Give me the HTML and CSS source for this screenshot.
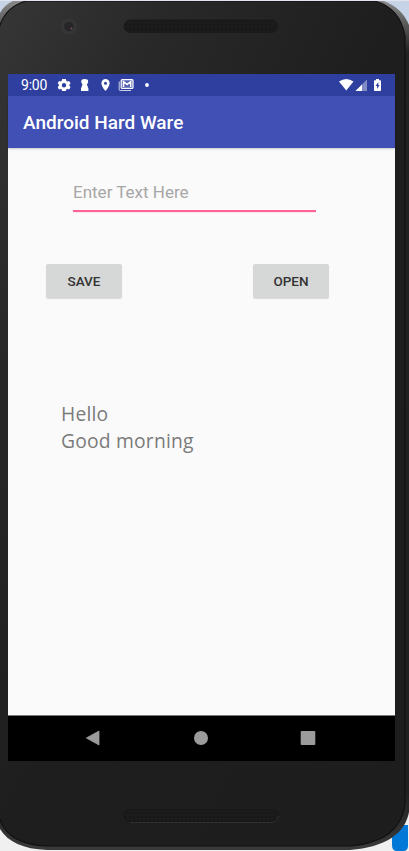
FILE: index.html
```
<!DOCTYPE html>
<html lang="en">
<head>
<meta charset="utf-8">
<title>Android Hard Ware</title>
<link rel="stylesheet" href="styles.css">
</head>
<body>
<div class="device">
  <svg class="shell" viewBox="0 0 409 851" aria-hidden="true">
    <defs>
      <linearGradient id="body" x1="0" y1="0" x2="1" y2="1">
        <stop offset="0" stop-color="#363636"/><stop offset=".2" stop-color="#292929"/><stop offset=".5" stop-color="#1e1e1e"/><stop offset="1" stop-color="#1d1d1d"/>
      </linearGradient>
      <linearGradient id="rim" x1="0" y1="0" x2="0" y2="1">
        <stop offset="0" stop-color="#888"/><stop offset=".03" stop-color="#555"/><stop offset=".06" stop-color="#222"/><stop offset=".93" stop-color="#202020"/><stop offset="1" stop-color="#3a3a3a"/>
      </linearGradient>
      <pattern id="mesh" width="4" height="4" patternUnits="userSpaceOnUse" x="1">
        <rect width="4" height="4" fill="#1c1c1c"/><circle cx="1" cy="1" r=".8" fill="#101010"/><circle cx="3" cy="3" r=".6" fill="#131313"/>
      </pattern>
    </defs>
    <rect width="409" height="426" fill="#c7d3e7"/>
    <rect y="425" width="409" height="426" fill="#f0f0f0"/>
    <path d="M392 825H408V846Q408 851 403 851H397Q392 851 392 845Z" fill="#0078d7"/>
    <path d="M13 1H384Q402 8 409 25V812C405 834 385 847 350 850H47C23 849 8 842 0 829V13Q4 5 13 1Z" fill="url(#rim)"/>
    <path d="M26 1H375Q400 8 405 36V805C401 829 386 842 351 846H47C20 845 4 835 -1 817V28Q5 7 26 1Z" fill="url(#body)" stroke="#111" stroke-width="1.200"/>
    <path d="M0 0H409V1H0Z" fill="#e1e6ee"/>
    <circle cx="69" cy="26.500" r="8" fill="#363636"/>
    <circle cx="69" cy="26.500" r="4.800" fill="#262529"/>
    <circle cx="71.500" cy="28.500" r="1" fill="#76535b"/>
    <rect x="124" y="20" width="154" height="12.500" rx="6.250" fill="url(#mesh)" stroke="#1b1b1b"/>
    <rect x="124" y="809.500" width="154" height="12" rx="6" fill="url(#mesh)" stroke="#171717"/>
    <path d="M130 822.500H272Q278 821 278.500 816" fill="none" stroke="#303030"/>
  </svg>

  <main class="screen">
    <div class="status">
      <span class="clock">9:00</span>
      <svg class="notices" viewBox="0 0 96 14" fill="#fff">
        <path fill-rule="evenodd" d="M5.200 1h3.600l.5 1.800 1 .6 1.800-.5 1.500 2.500-1.200 1.200v1.200l1.200 1.200-1.500 2.500-1.800-.5-1 .6-.5 1.400H5.200l-.5-1.400-1-.6-1.800.5L.7 9l1.200-1.200V6.600L.7 5.400l1.200-2.500 1.800.5 1-.6ZM7 5a2.200 2.200 0 1 0 0 4.400A2.200 2.200 0 0 0 7 5Z"/>
        <path d="M24.300 3Q24.300 1 27.700 1T31.100 3V4.500L29.900 6.500 31.400 10.500V13H24V10.500L25.500 6.500 24.300 4.500Z"/>
        <path fill-rule="evenodd" d="M48.500 1a4.100 4.100 0 0 0-4.100 4.200C44.400 8.500 48.500 13 48.500 13s4.100-4.500 4.100-7.800A4.100 4.100 0 0 0 48.500 1Zm0 2.700a1.500 1.500 0 1 1 0 3 1.500 1.500 0 0 1 0-3Z"/>
        <path fill="#ffffff30" stroke="#fff" stroke-width="1.200" d="M65.200 1.600h9.800q1 0 1 1v6.800q0 1-1 1h-9.800q-1 0-1-1V2.600q0-1 1-1Z"/>
        <path fill="none" stroke="#fff" stroke-opacity=".75" d="M62.200 3.500v8q0 1 1 1H74"/>
        <path fill="none" stroke="#fff" stroke-width="1.500" d="M66.500 9V3.500l3.600 3 3.600-3V9"/>
        <circle cx="90" cy="7" r="1.900"/>
      </svg>
      <svg class="signals" viewBox="0 0 43 14" fill="#fff">
        <path d="M0 3.500Q7.200-1.500 14.500 3.500L7.250 12.500Z"/>
        <path d="M16.500 13H28V1.500Z" opacity=".4"/><path d="M16.500 13H23V6.500Z"/>
        <path fill-rule="evenodd" d="M37 1h3v1.300h1.200q.8 0 .8.800v9q0 .9-.8.900h-5.400q-.8 0-.8-.9v-9q0-.8.8-.8H37Zm2.300 3-2.700 4h1.500v3l2.500-4h-1.300Z"/>
      </svg>
    </div>
    <header class="appbar">Android Hard Ware</header>
    <div class="content">
      <div class="field">Enter Text Here</div>
      <div class="actions">
        <button class="btn">SAVE</button>
        <button class="btn">OPEN</button>
      </div>
      <p class="output">Hello<br>Good morning</p>
    </div>
    <nav class="nav">
      <svg viewBox="0 0 16 16" fill="#9b9b9b"><path d="M1.300 8 14 1V15Z" stroke="#9b9b9b" stroke-width=".8" stroke-linejoin="round"/></svg>
      <svg viewBox="0 0 16 16" fill="#9b9b9b"><circle cx="8" cy="8" r="7"/></svg>
      <svg viewBox="0 0 16 16" fill="#9b9b9b"><rect x=".7" y="1" width="14.600" height="14" rx="1"/></svg>
    </nav>
  </main>
</div>
</body>
</html>
```
FILE: styles.css
```
* { box-sizing: border-box; }
body { margin: 0; font-family: Roboto, sans-serif; }
.device { position: relative; width: 409px; height: 851px; padding: 74px 14px 90px 8px; overflow: hidden; }
.shell { position: absolute; inset: 0; width: 409px; height: 851px; }
.screen { position: relative; width: 387px; height: 687px; display: flex; flex-direction: column; background: #fafafa; }
.status { height: 22px; background: #2f3f9f; color: #fff; display: flex; align-items: center; padding: 0 13px; }
.clock { width: 36px; font-size: 14px; line-height: 22px; letter-spacing: -.2px; }
.notices { width: 96px; height: 14px; }
.signals { width: 43px; height: 14px; margin-left: auto; }
.appbar { height: 52px; background: #4050b5; color: #fff; font-size: 19px; font-weight: 500; line-height: 54px; padding-left: 15px; box-shadow: 0 1px 2px #0003; }
.content { height: 567px; padding-top: 25px; }
.field { width: 243px; height: 39px; margin-left: 65px; border-bottom: 2px solid #ff6296; box-shadow: 0 .5px 0 #ff629640; color: #a7a7a7; font-size: 17px; line-height: 38px; }
.actions { display: flex; justify-content: space-between; width: 283px; margin: 52px 0 0 38px; }
.btn { width: 76px; height: 34px; padding: 0; border: 0; border-radius: 2px; background: #d6d7d7; color: #333; font: 500 13.500px/35px Roboto, sans-serif; box-shadow: 0 1px 1px #0002; }
.output { margin: 102px 0 0 53px; font-family: "Open Sans", sans-serif; font-size: 19.300px; line-height: 27px; letter-spacing: .2px; color: #7b7b7b; }
.nav { height: 46px; background: #000; border-top: 1px solid #777; display: flex; align-items: center; gap: 91.500px; padding: 0 0 1px 77px; }
.nav svg { width: 16px; height: 16px; }
```
